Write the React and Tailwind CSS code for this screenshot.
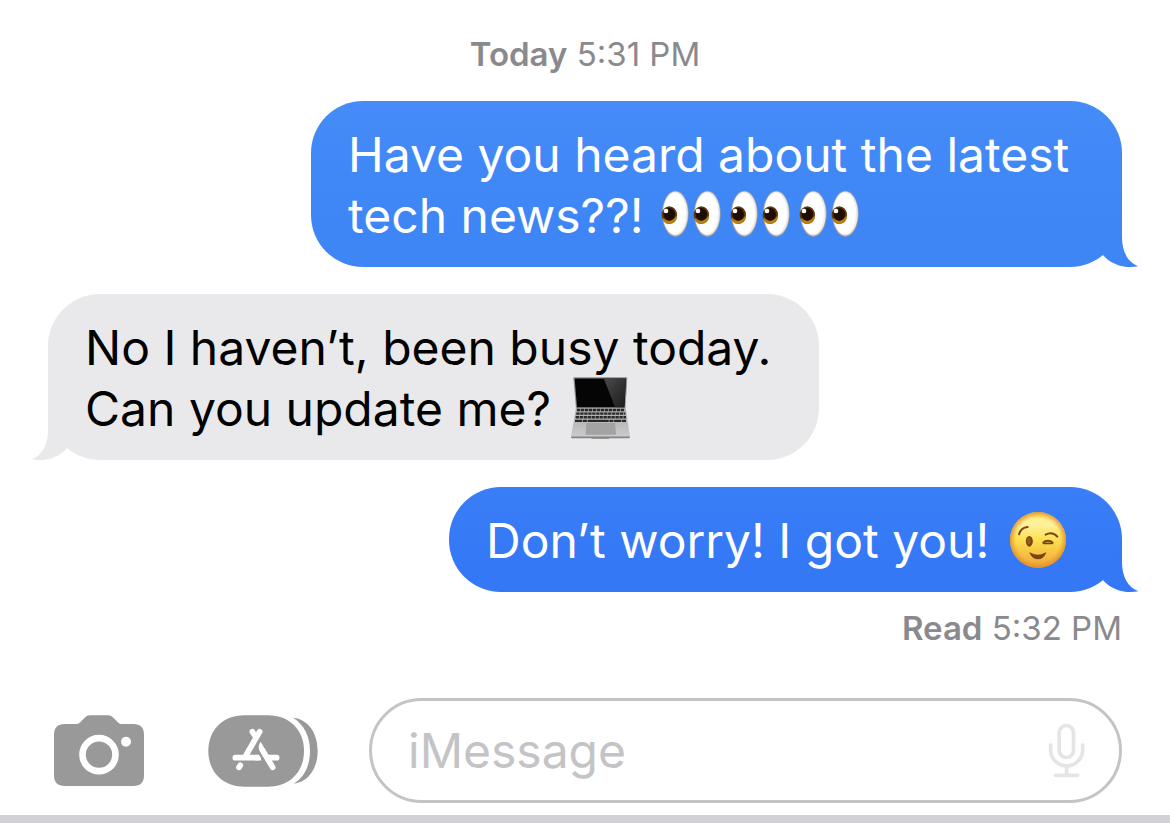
import React from "react";

function Tail({ side, className }) {
  const place = side === "right" ? "-right-[18px]" : "-left-[18px] -scale-x-100";
  return (
    <svg
      aria-hidden="true"
      viewBox="0 0 44 54"
      className={`absolute -bottom-[2px] h-[54px] w-[44px] ${place} ${className}`}
    >
      <path
        fill="currentColor"
        d="M26 0V22C26 37 32 47.5 42.5 51.3C29 53.8 16 50 7 40.2Z"
      />
    </svg>
  );
}

function Bubble({ side, className, tailClass, children }) {
  const align = side === "right" ? "self-end" : "self-start";
  return (
    <div
      className={`relative max-w-full rounded-[52px] pt-[23px] pr-[36px] pb-[21px] pl-[37px] text-[48px] leading-[61px] ${align} ${className}`}
    >
      <Tail side={side} className={tailClass} />
      <p className="relative">{children}</p>
    </div>
  );
}

function Eye({ x }) {
  return (
    <g transform={`translate(${x} 0)`}>
      <ellipse cx="109" cy="131" rx="40" ry="69" fill="#a9a49f" />
      <ellipse cx="109" cy="130.500" rx="37.500" ry="66" fill="#ececec" />
      <ellipse cx="107" cy="130" rx="34" ry="62" fill="#fff" />
      <ellipse cx="91" cy="135" rx="23" ry="26" fill="#5d3506" />
      <path d="M72 146a21 23 0 0 0 40-6c-5 12-26 20-40 6z" fill="#c98f1c" stroke="#b57a14" strokeWidth="4" />
      <ellipse cx="91" cy="133" rx="17" ry="19" fill="#200d02" />
      <circle cx="81" cy="123" r="7" fill="#fff" />
    </g>
  );
}

function Eyes() {
  return (
    <svg
      role="img"
      aria-label="eyes"
      viewBox="60 42 207 168"
      className="-mt-2 inline-block h-[56px] w-[69px] align-[-7px]"
    >
      <Eye x={0} />
      <Eye x={96} />
    </svg>
  );
}

function Laptop() {
  const rows = [149, 160, 171, 182];
  return (
    <svg
      role="img"
      aria-label="laptop"
      viewBox="58 50 184 186"
      className="-mt-2 ml-1.5 inline-block h-[62px] w-[61px] align-[-13px]"
    >
      <defs>
        <linearGradient id="glare" x1="0" y1="0" x2="1" y2="1">
          <stop offset="0" stopColor="#4a4a4a" />
          <stop offset="1" stopColor="#1b1b1b" />
        </linearGradient>
        <linearGradient id="deck" x1="0" y1="0" x2="0" y2="1">
          <stop offset="0" stopColor="#aaa" />
          <stop offset="1" stopColor="#cdcdcd" />
        </linearGradient>
      </defs>
      <path d="M68 52q0-2 3-2h157q3 0 3 2l-6 92H76z" fill="#8d8d8d" />
      <path d="M72 54h155l-5 87H79z" fill="#050505" />
      <path d="M160 54h67l-5 87h-28z" fill="url(#glare)" />
      <path d="M76 143h150l13 86q1 4-3 4h-58l-3 3h-50l-3-3H64q-4 0-3-4z" fill="url(#deck)" />
      <path d="M61 229h178q0 5-3 5h-58l-3 2h-50l-3-2H64q-3 0-3-5z" fill="#858585" />
      {rows.map((y, i) => (
        <path
          key={y}
          d={`M${79 - i * 2} ${y}H${223 + i * 2}`}
          stroke="#282828"
          strokeWidth="7"
          strokeDasharray={i === 3 ? "22 2 12 2 64 2 12 2" : "10 2"}
        />
      ))}
      <path d="M107 188h87l3 36h-92z" fill="#a3a3a3" />
    </svg>
  );
}

function Wink() {
  return (
    <svg
      role="img"
      aria-label="winking face"
      viewBox="57 62 174 174"
      className="-mt-2 ml-1.5 inline-block h-[58px] w-[58px] align-[-11px]"
    >
      <defs>
        <linearGradient id="face" x1="0" y1="0" x2="0" y2="1">
          <stop offset="0" stopColor="#fde96b" />
          <stop offset="0.2" stopColor="#fef2a0" />
          <stop offset="0.5" stopColor="#fce04f" />
          <stop offset="1" stopColor="#f1a13a" />
        </linearGradient>
        <radialGradient id="rim" cx="0.5" cy="0.5" r="0.5">
          <stop offset="0.78" stopColor="#ec9a26" stopOpacity="0" />
          <stop offset="1" stopColor="#e08a22" stopOpacity="0.85" />
        </radialGradient>
      </defs>
      <circle cx="144" cy="149" r="84" fill="url(#face)" />
      <circle cx="144" cy="149" r="84" fill="url(#rim)" />
      <ellipse cx="118" cy="153" rx="10.500" ry="16" fill="#7b4512" />
      <ellipse cx="117" cy="152" rx="5" ry="10" fill="#965c1c" />
      <g fill="none" stroke="#7b4512" strokeWidth="6" strokeLinecap="round">
        <path d="M87 132C91 119 99 111 113 110" />
        <path d="M167 133C180 126 192 128 202 139" />
        <path d="M160 157C166 149 181 149 188 157" />
        <path d="M161 159H187" strokeWidth="5" />
      </g>
      <path d="M119 189Q117 184 122 187Q144 199 165 187Q170 184 168 189Q160 207 144 207Q127 207 119 189Z" fill="#7b4512" />
    </svg>
  );
}

function CameraIcon() {
  return (
    <svg aria-hidden="true" viewBox="42 46 270 213" className="h-[71px] w-[90px]">
      <path
        fill="#999"
        d="M74 73H108C114 73 118 70 122 66L134 54Q141 47 151 47H204Q213 47 220 54L232 66C236 71 240 73 246 73H280Q312 73 312 105V227Q312 259 280 259H74Q42 259 42 227V105Q42 73 74 73Z"
      />
      <circle cx="177" cy="165" r="49.500" fill="none" stroke="#fff" strokeWidth="20" />
      <circle cx="258" cy="126" r="15" fill="#fff" />
    </svg>
  );
}

function AppsIcon() {
  return (
    <svg aria-hidden="true" viewBox="40 46 330 216" className="h-[72px] w-[110px]">
      <path
        fill="#999"
        d="M150 47H219C285 47 328 91 328 154C328 217 285 261 219 261H150C84 261 41 217 41 154C41 91 84 47 150 47Z"
      />
      <path
        fill="#999"
        d="M295 54C340 58 369 99 369 154C369 208 340 247 297 252C329 233 346 198 346 154C346 111 329 75 295 54Z"
      />
      <g fill="none" stroke="#fff" strokeWidth="17" strokeLinecap="round">
        <path d="M195 96L153 169" />
        <path d="M173 96L182 110" />
        <path d="M203 151L234 203" />
        <path d="M122 174H186" />
        <path d="M221 174H246" />
        <path d="M137 197L133 203" />
      </g>
      <path d="M198 126Q190 136 193 149L198 158L211 149Z" fill="#fff" />
      <path d="M182 165.500H192Q199 170 200 182.500H182Z" fill="#fff" />
    </svg>
  );
}

function MicIcon() {
  return (
    <svg
      aria-hidden="true"
      viewBox="83 98 111 165"
      className="h-[55px] w-[37px]"
      fill="none"
      stroke="#e5e5e5"
      strokeWidth="11"
      strokeLinecap="round"
    >
      <rect x="116.500" y="105.500" width="43" height="96" rx="21.500" />
      <path d="M91 164V179A48 48 0 0 0 187 179V164" />
      <path d="M139 227V255M106 255H172" />
    </svg>
  );
}

export default function App() {
  return (
    <div className="flex min-h-screen flex-col bg-white font-['Inter','Liberation_Sans',sans-serif]">
      <main className="flex flex-col gap-[27px] px-12 pt-[34px]">
        <p className="text-center text-[33px] leading-10 text-[#8a8a8e]">
          <span className="font-semibold">Today</span> 5:31 PM
        </p>
        <Bubble
          side="right"
          className="w-[811px] bg-linear-to-b from-[#458cf8] to-[#3e85f6] to-75% text-white"
          tailClass="text-[#3e85f6]"
        >
          Have you heard about the latest tech news??!{" "}
          <span className="ml-0.5 whitespace-nowrap">
            <Eyes />
            <Eyes />
            <Eyes />
          </span>
        </Bubble>
        <Bubble
          side="left"
          className="w-[771px] bg-[#e9e9eb] text-black"
          tailClass="text-[#e9e9eb]"
        >
          No I haven’t, been busy today. Can you update me? <Laptop />
        </Bubble>
        <div className="flex flex-col gap-4">
          <Bubble
            side="right"
            className="w-[673px] bg-linear-to-b from-[#397df7] to-[#3478f6] to-75% text-white"
            tailClass="text-[#3478f6]"
          >
            Don’t worry! I got you! <Wink />
          </Bubble>
          <p className="text-right text-[33px] leading-10 text-[#8a8a8e]">
            <span className="font-semibold">Read</span> 5:32 PM
          </p>
        </div>
      </main>
      <form
        className="mt-[50px] flex items-center pr-12 pb-3 pl-[54px]"
        onSubmit={(e) => e.preventDefault()}
      >
        <button type="button" aria-label="Camera" className="mr-16 shrink-0">
          <CameraIcon />
        </button>
        <button type="button" aria-label="Apps" className="mr-[51px] shrink-0">
          <AppsIcon />
        </button>
        <div className="flex h-[105px] min-w-0 flex-1 items-center rounded-full border-3 border-[#c4c4c6] pr-[34px] pl-9">
          <input
            type="text"
            aria-label="iMessage"
            placeholder="iMessage"
            className="min-w-0 flex-1 bg-transparent text-[48px] leading-[61px] text-black outline-none placeholder:text-[#c4c4c6]"
          />
          <button type="button" aria-label="Dictate" className="shrink-0">
            <MicIcon />
          </button>
        </div>
      </form>
      <footer className="h-2 bg-[#d1d1d6]" />
    </div>
  );
}
